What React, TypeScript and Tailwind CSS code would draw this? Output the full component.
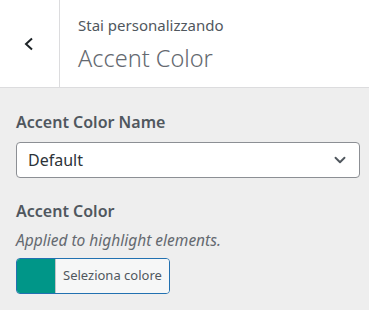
import { ChevronDown } from 'lucide-react';

export default function App() {
  return (
    <div className="w-[369px] h-[310px] bg-[#eeeeee] text-[#50575e] font-['Noto_Sans',sans-serif] overflow-hidden">
      <div className="flex h-[88px] bg-white border-b border-[#dcdcde]">
        <button className="w-[60px] flex items-center justify-center border-r border-[#dcdcde] text-[#1d2327]">
          <svg width="12" height="14" viewBox="0 0 12 14" fill="none">
            <path d="M8 1.5 L2 7 L8 12.5" stroke="currentColor" strokeWidth="2" />
          </svg>
        </button>
        <div className="flex flex-col pl-[18px] pt-[15px]">
          <span className="text-[15px] leading-[20px]">Stai personalizzando</span>
          <span className="text-[23.5px] leading-[30px] font-light text-[#646970] mt-[8px]">Accent Color</span>
        </div>
      </div>

      <div className="px-4 pt-[23px]">
        <div className="text-[16px] leading-[22px] font-semibold">Accent Color Name</div>
        <div className="mt-[9px] h-[36px] w-[344px] bg-white border border-[#8c8f94] rounded-[4px] flex items-center justify-between pl-[11px] pr-[10px]">
          <span className="text-[16px] text-[#2c3338]">Default</span>
          <ChevronDown className="w-[18px] h-[18px] text-[#50575e]" strokeWidth={2.5} />
        </div>

        <div className="mt-[22px] text-[16px] leading-[22px] font-semibold">Accent Color</div>
        <div className="mt-[8px] text-[15.5px] leading-[20px] italic text-[#646970]">Applied to highlight elements.</div>
        <button className="mt-[8px] flex h-[36px] border border-[#2271b1] rounded-[4px] overflow-hidden">
          <span className="w-[39px] h-full bg-[#009688] border-r border-[#c3c4c7]" />
          <span className="px-[7px] h-full flex items-center bg-[#f6f7f7] text-[13px] text-[#50575e]">Seleziona colore</span>
        </button>
      </div>
    </div>
  );
}
